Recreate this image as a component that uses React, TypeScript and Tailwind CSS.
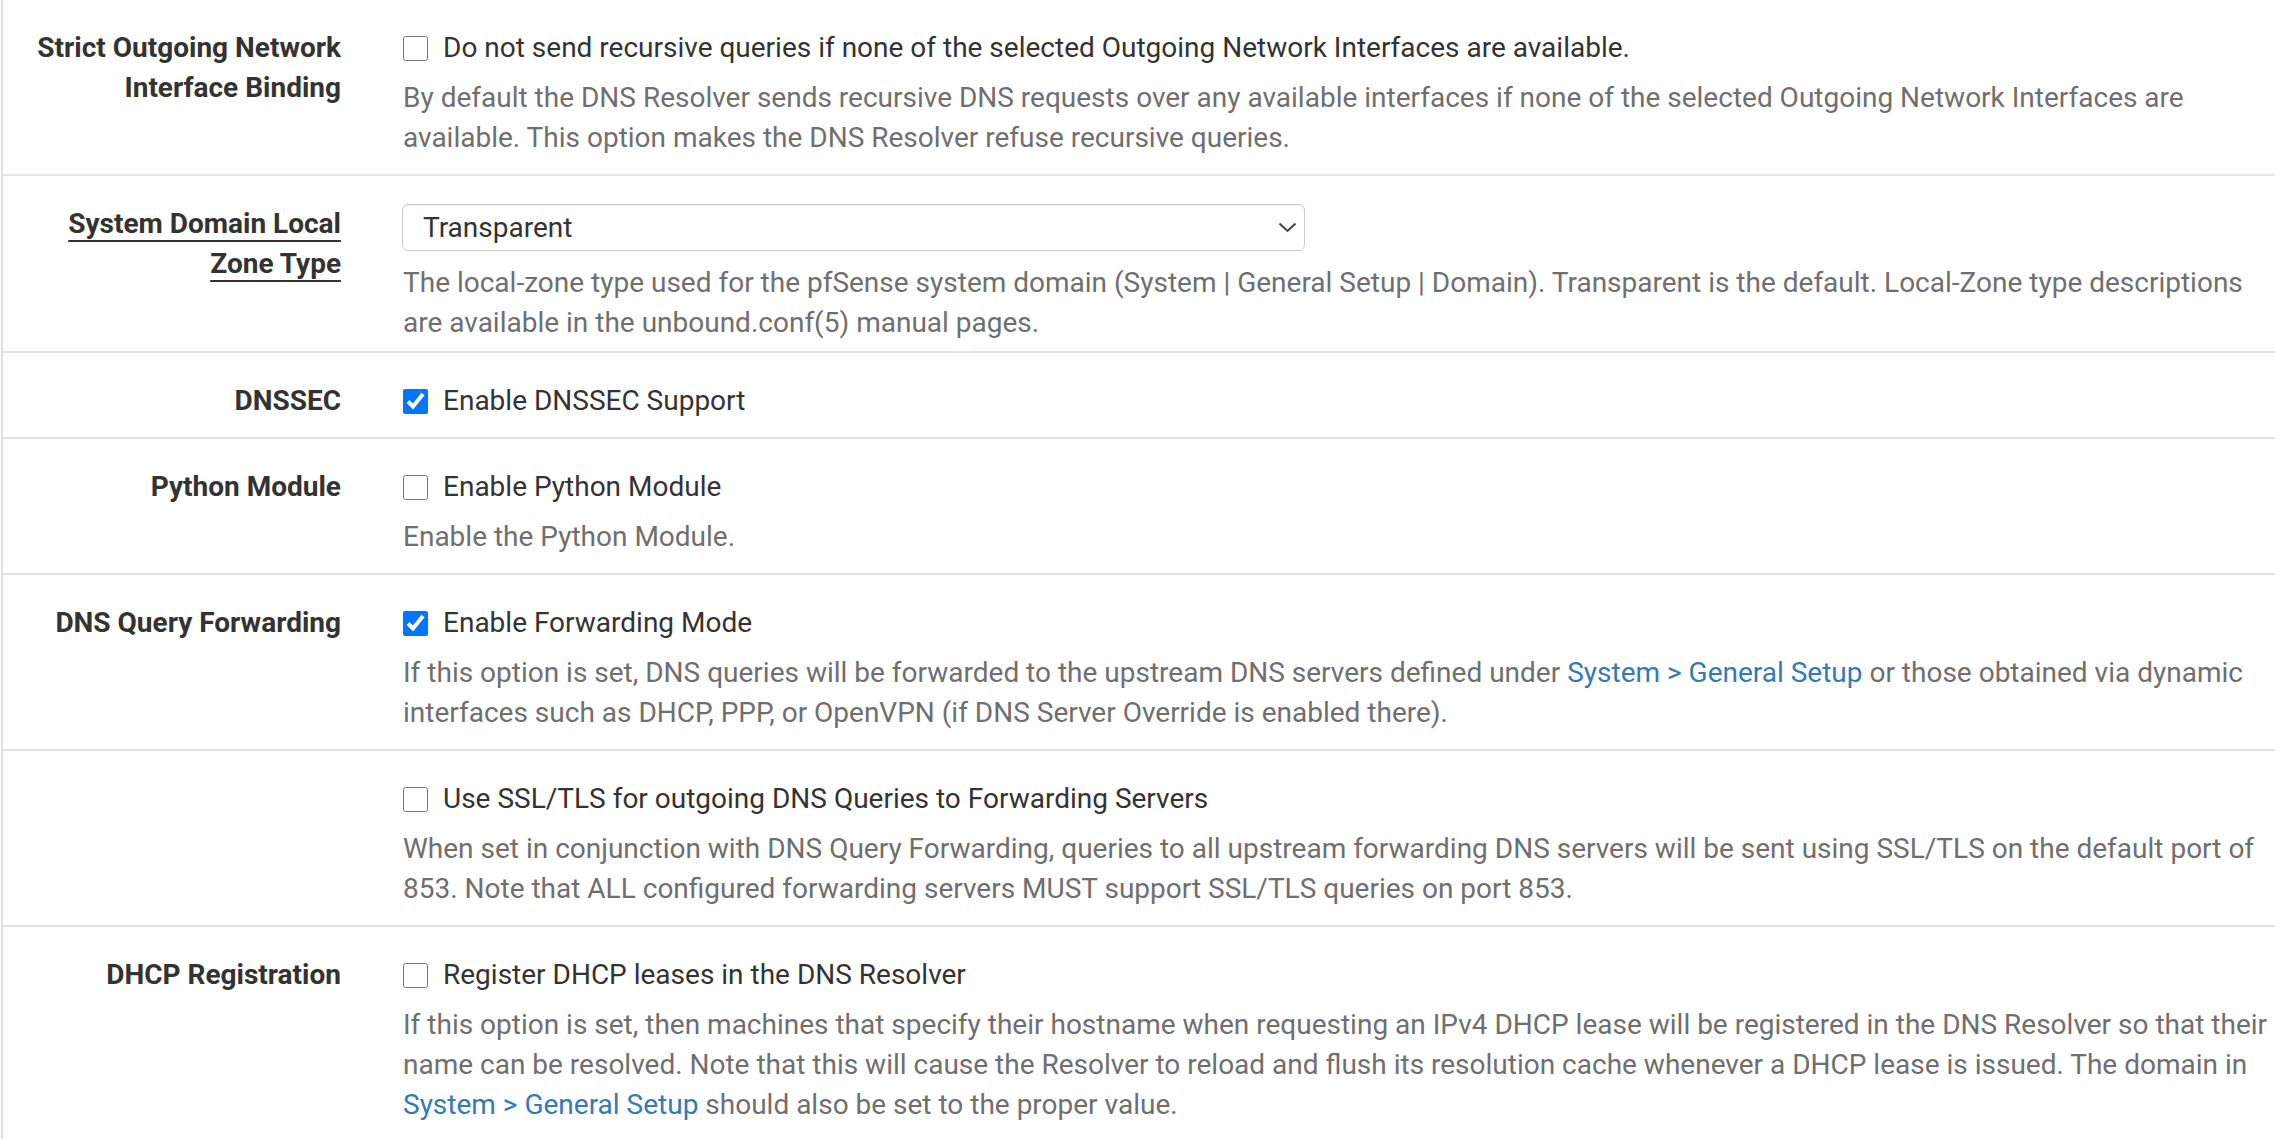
import { ReactNode } from "react"

function Row({
  label,
  underline,
  children,
  last,
  pb = "pb-[16px]",
}: {
  label?: string
  underline?: boolean
  children: ReactNode
  last?: boolean
  pb?: string
}) {
  return (
    <div className={`flex pt-[28px] ${pb} ${last ? "" : "border-b-2 border-[#e3e3e3]"}`}>
      <div className="w-[338px] shrink-0 pl-[24px] text-right">
        {label && (
          <span
            className={`font-bold text-[28px] leading-[40px] text-[#333333] ${
              underline ? "underline decoration-2 underline-offset-[7px]" : ""
            }`}
          >
            {label}
          </span>
        )}
      </div>
      <div className="ml-[62px] mr-[6px] flex-1">{children}</div>
    </div>
  )
}

function Check({ checked, children }: { checked?: boolean; children: ReactNode }) {
  return (
    <label className="flex items-center h-[40px] text-[28px] text-[#333333]">
      <input
        type="checkbox"
        defaultChecked={checked}
        className="w-[25px] h-[25px] m-0 mr-[15px] accent-[#0075ff]"
      />
      {children}
    </label>
  )
}

function Help({ children, mt = "mt-[10px]" }: { children: ReactNode; mt?: string }) {
  return <p className={`${mt} text-[28px] leading-[40px] text-[#6f6f6f]`}>{children}</p>
}

function Link({ children }: { children: ReactNode }) {
  return (
    <a href="#" className="text-[#337ab7]">
      {children}
    </a>
  )
}

export default function App() {
  return (
    <div className="min-h-screen bg-white font-['Roboto',sans-serif]">
      <div className="ml-px border-l-2 border-[#e0e0e0]">
        {/* Strict binding */}
        <Row label="Strict Outgoing Network Interface Binding">
          <Check>Do not send recursive queries if none of the selected Outgoing Network Interfaces are available.</Check>
          <Help>
            By default the DNS Resolver sends recursive DNS requests over any available interfaces if none of the
            selected Outgoing Network Interfaces are available. This option makes the DNS Resolver refuse recursive
            queries.
          </Help>
        </Row>

        {/* Local zone type */}
        <Row label="System Domain Local Zone Type" underline pb="pb-[8px]">
          <div className="relative w-[903px] -ml-px">
            <select className="appearance-none w-full h-[47px] rounded-[6px] border border-[#cccccc] bg-white pl-[20px] text-[28px] text-[#333333] shadow-[inset_0_1px_1px_rgba(0,0,0,0.075)] outline-none">
              <option>Transparent</option>
            </select>
            <svg
              className="pointer-events-none absolute right-[8px] top-[18px]"
              width="19"
              height="11"
              viewBox="0 0 19 11"
              fill="none"
            >
              <path d="M1.5 1.5L9.5 9L17.5 1.5" stroke="#444" strokeWidth="2" />
            </svg>
          </div>
          <Help mt="mt-[12px]">
            The local-zone type used for the pfSense system domain (System | General Setup | Domain). Transparent is the
            default. Local-Zone type descriptions are available in the unbound.conf(5) manual pages.
          </Help>
        </Row>

        {/* DNSSEC */}
        <Row label="DNSSEC">
          <Check checked>Enable DNSSEC Support</Check>
        </Row>

        {/* Python */}
        <Row label="Python Module">
          <Check>Enable Python Module</Check>
          <Help>Enable the Python Module.</Help>
        </Row>

        {/* Forwarding */}
        <Row label="DNS Query Forwarding">
          <Check checked>Enable Forwarding Mode</Check>
          <Help>
            If this option is set, DNS queries will be forwarded to the upstream DNS servers defined under{" "}
            <Link>System &gt; General Setup</Link> or those obtained via dynamic interfaces such as DHCP, PPP, or
            OpenVPN (if DNS Server Override is enabled there).
          </Help>
        </Row>

        <Row>
          <Check>Use SSL/TLS for outgoing DNS Queries to Forwarding Servers</Check>
          <Help>
            When set in conjunction with DNS Query Forwarding, queries to all upstream forwarding DNS servers will be
            sent using SSL/TLS on the default port of 853. Note that ALL configured forwarding servers MUST support
            SSL/TLS queries on port 853.
          </Help>
        </Row>

        {/* DHCP */}
        <Row label="DHCP Registration" last>
          <Check>Register DHCP leases in the DNS Resolver</Check>
          <Help>
            If this option is set, then machines that specify their hostname when requesting an IPv4 DHCP lease will be
            registered in the DNS Resolver so that their name can be resolved. Note that this will cause the Resolver
            to reload and flush its resolution cache whenever a DHCP lease is issued. The domain in{" "}
            <Link>System &gt; General Setup</Link> should also be set to the proper value.
          </Help>
        </Row>
      </div>
    </div>
  )
}
